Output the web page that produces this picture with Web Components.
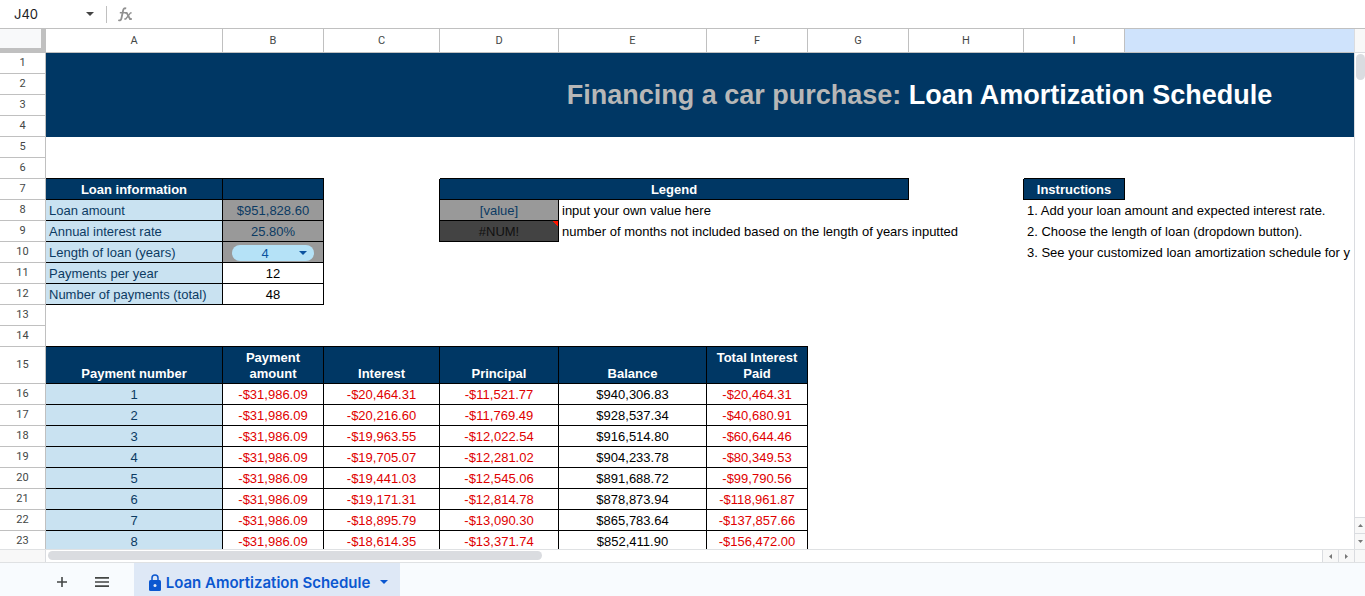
<!DOCTYPE html>
<html lang="en">
<head>
<meta charset="utf-8">
<title>Loan Amortization Schedule</title>
<style>
html, body { margin: 0; height: 100%; }
body { font-family: "Liberation Sans", Arial, sans-serif; background: #fff; overflow: hidden; }
</style>
</head>
<body>
<sheet-app></sheet-app>
<script>
function attach(el, html) {
  const t = document.createElement('template');
  t.innerHTML = html;
  el.attachShadow({ mode: 'open' }).appendChild(t.content.cloneNode(true));
}

/* Name box and function bar */
customElements.define('formula-bar', class extends HTMLElement {
  constructor() {
    super();
    attach(this, `
      <style>
        :host { display: flex; align-items: center; height: 28px; border-bottom: 1px solid #c0c0c0; background: #fff; }
        input { border: 0; outline: 0; background: none; padding: 0; margin: 0; height: 24px; color: #202124; }
        .name { width: 68px; margin-left: 14px; font: 13px Inter, Roboto, sans-serif; }
        button { border: 0; padding: 0; background: none; width: 16px; height: 20px; display: grid; place-items: center; }
        .rule { width: 1px; height: 17px; background: #c0c0c0; margin: 0 11px 0 8px; }
        .fx { display: block; }
        .formula { flex: 1; margin-left: 8px; font: 13px "Liberation Sans", sans-serif; }
      </style>
      <input class="name" aria-label="Name box" value="J40">
      <button aria-label="Open name box list"><svg width="8" height="4" viewBox="0 0 8 4"><path d="M0 0h8L4 4z" fill="#444"/></svg></button>
      <span class="rule"></span>
      <svg class="fx" width="15" height="16" viewBox="0 0 15 16" fill="none" stroke="#909090" aria-hidden="true">
        <path d="M.4 14c1.500 1 2.600.2 3-1.500L5.100 4.500C5.500 2.600 6.500 1.800 8.200 2.500" stroke-width="1.800"/>
        <path d="M1.800 6.700h5.500" stroke-width="1.500"/>
        <path d="M7 6.900h1.700l3.300 6.100h1.800" stroke-width="1.800"/>
        <path d="M13.700 6.900h-1.200l-4.800 6.100H6.300" stroke-width="1.400"/>
      </svg>
      <input class="formula" aria-label="Formula">`);
  }
});

/* Drop-down chip that lives in a cell */
customElements.define('chip-select', class extends HTMLElement {
  constructor() {
    super();
    attach(this, `
      <style>
        :host { display: grid; margin: 0 9px; color: #0b53a0; }
        select, svg { grid-area: 1 / 1; }
        select { appearance: none; border: 0; outline: 0; margin: 0; padding: 0 24px 0 8px; height: 16px; line-height: 16px;
          border-radius: 8px; background: #b5e2f7; color: inherit; font: 13px "Liberation Sans", Arial, sans-serif; text-align: center; text-align-last: center; }
        svg { justify-self: end; align-self: center; margin-right: 7px; pointer-events: none; }
      </style>
      <select aria-label="Length of loan (years)"><option>1</option><option>2</option><option>3</option><option selected>4</option></select>
      <svg width="8" height="4" viewBox="0 0 8 4"><path d="M0 0h8L4 4z" fill="#0b53a0"/></svg>`);
  }
});

/* Cell grid */
customElements.define('sheet-grid', class extends HTMLElement {
  constructor() {
    super();
    const widths = [46, 177, 101, 116, 119, 148, 101, 101, 115, 101, 668];
    const row = (n, cells, cls = '') => `<tr class="${cls}"><th scope="row">${n}</th>${cells}</tr>`;
    const info = (label, value, cls = '') => `<td class="tint k">${label}</td><td class="k c ${cls}">${value}</td>`;
    const payments = [
      ['-$20,464.31', '-$11,521.77', '$940,306.83', '-$20,464.31'],
      ['-$20,216.60', '-$11,769.49', '$928,537.34', '-$40,680.91'],
      ['-$19,963.55', '-$12,022.54', '$916,514.80', '-$60,644.46'],
      ['-$19,705.07', '-$12,281.02', '$904,233.78', '-$80,349.53'],
      ['-$19,441.03', '-$12,545.06', '$891,688.72', '-$99,790.56'],
      ['-$19,171.31', '-$12,814.78', '$878,873.94', '-$118,961.87'],
      ['-$18,895.79', '-$13,090.30', '$865,783.64', '-$137,857.66'],
      ['-$18,614.35', '-$13,371.74', '$852,411.90', '-$156,472.00']];
    const money = v => `<td class="k c${v[0] === '-' ? ' neg' : ''}">${v}</td>`;
    attach(this, `
      <style>
        :host { display: block; overflow: hidden; min-width: 0; }
        table { table-layout: fixed; width: 0; border-collapse: separate; border-spacing: 0; font-size: 13px; line-height: 16px; }
        tr { height: 21px; }
        th, td { box-sizing: border-box; padding: 0; }
        td { white-space: nowrap; vertical-align: bottom; padding: 0 3px 2px; color: #000; }
        thead tr { height: 24px; }
        thead th, th[scope=row] { font: 11px Roboto, sans-serif; color: #444746; border: 0 solid #c0c0c0; border-width: 0 1px 1px 0; background: #fff; }
        th[scope=row] { padding-bottom: 2px; }
        thead .corner { border-width: 0 5px 5px 0; background: #f8f9fa; }
        thead .on { background: #cfe3fc; }
        .title { background: #003764; color: #fff; font-size: 27px; line-height: 32px; font-weight: bold; text-align: center; vertical-align: middle; padding: 0; }
        .title span { color: #b7b7b7; }
        .k { border: 0 solid #000; border-width: 0 1px 1px 0; padding-bottom: 1px; }
        .b { border-bottom: 1px solid #000; }
        .r { border-right: 1px solid #000; }
        .c { text-align: center; }
        .head { background: #003764; color: #fff; font-weight: bold; text-align: center; white-space: normal; }
        .tint { background: #c9e2f1; color: #0c3b63; }
        .gray { background: #999; color: #0c3b63; }
        .err { background: linear-gradient(225deg, #ff1500 4px, #434343 4px); color: #111; }
        .neg { color: #e00000; }
        .tall { height: 37px; }
        .chip { padding: 0 0 1px; }
      </style>
      <table>
        <colgroup>${widths.map(w => `<col style="width:${w}px">`).join('')}</colgroup>
        <thead><tr><th class="corner"></th>${[...'ABCDEFGHI'].map(l => `<th scope="col">${l}</th>`).join('')}<th class="on"></th></tr></thead>
        <tbody>
          ${row(1, '<td class="title" colspan="10" rowspan="4"><span>Financing a car purchase:</span> Loan Amortization Schedule</td>')}
          ${row(2, '')}${row(3, '')}${row(4, '')}
          ${row(5, '<td colspan="10"></td>')}
          ${row(6, '<td class="b" colspan="2"></td><td></td><td class="b" colspan="4"></td><td></td><td class="b"></td><td></td>')}
          ${row(7, '<td class="head k">Loan information</td><td class="head k"></td><td class="r"></td><td class="head k" colspan="4">Legend</td><td class="r"></td><td class="head k">Instructions</td><td></td>')}
          ${row(8, info('Loan amount', '$951,828.60', 'gray') + '<td class="r"></td><td class="gray k c">[value]</td><td colspan="4">input your own value here</td><td colspan="2">1. Add your loan amount and expected interest rate.</td>')}
          ${row(9, info('Annual interest rate', '25.80%', 'gray') + '<td class="r"></td><td class="err k c">#NUM!</td><td colspan="4">number of months not included based on the length of years inputted</td><td colspan="2">2. Choose the length of loan (dropdown button).</td>')}
          ${row(10, '<td class="tint k">Length of loan (years)</td><td class="gray k chip"><chip-select></chip-select></td><td colspan="6"></td><td colspan="2">3. See your customized loan amortization schedule for y</td>')}
          ${row(11, info('Payments per year', '12') + '<td colspan="8"></td>')}
          ${row(12, info('Number of payments (total)', '48') + '<td colspan="8"></td>')}
          ${row(13, '<td colspan="10"></td>')}
          ${row(14, '<td class="b" colspan="6"></td><td colspan="4"></td>')}
          ${row(15, ['Payment number', 'Payment amount', 'Interest', 'Principal', 'Balance', 'Total Interest Paid'].map(h => `<td class="head k">${h}</td>`).join('') + '<td colspan="4"></td>', 'tall')}
          ${payments.map((p, i) => row(16 + i, `<td class="tint k c">${i + 1}</td>${money('-$31,986.09')}${p.map(money).join('')}<td colspan="4"></td>`)).join('')}
        </tbody>
      </table>`);
  }
});

/* Vertical and horizontal scroll rails */
customElements.define('scroll-rail', class extends HTMLElement {
  constructor() {
    super();
    const v = this.getAttribute('axis') === 'y';
    const arrow = d => `<svg width="5" height="5" viewBox="0 0 5 5"><path d="${d}" fill="#777"/></svg>`;
    attach(this, `
      <style>
        :host { display: flex; background: #fff; box-sizing: border-box; }
        :host([axis=y]) { flex-direction: column; width: 11px; border-left: 1px solid #dadce0; }
        :host([axis=x]) { height: 14px; border: solid #dfe1e3; border-width: 1px 0; }
        .start, .end { background: #f8f8f8; }
        .track { flex: 1; display: flex; }
        .thumb { background: #dadce0; border-radius: 5px; }
        button { border: 0 solid #dadce0; background: #f8f8f8; padding: 0; display: grid; place-items: center; }
        :host([axis=y]) .start { height: 23px; border-bottom: 1px solid #dadce0; }
        :host([axis=y]) .end { display: none; }
        :host([axis=y]) .thumb { width: 9px; height: 26px; margin: 1px 0 0 1px; }
        :host([axis=y]) button { height: 16px; border-top-width: 1px; }
        :host([axis=x]) .start { width: 45px; border-right: 1px solid #dadce0; }
        :host([axis=x]) .thumb { width: 494px; height: 9px; margin: 1px 0 0 2px; }
        :host([axis=x]) button { width: 16px; border-left-width: 1px; }
        :host([axis=x]) .end { width: 10px; border-left: 1px solid #dadce0; }
      </style>
      <div class="start"></div>
      <div class="track"><div class="thumb"></div></div>
      <button aria-label="${v ? 'Scroll up' : 'Scroll left'}">${arrow(v ? 'M0 4L2.500 1 5 4z' : 'M4 0L1 2.500 4 5z')}</button>
      <button aria-label="${v ? 'Scroll down' : 'Scroll right'}">${arrow(v ? 'M0 1h5L2.500 4z' : 'M1 0l3 2.500L1 5z')}</button>
      <div class="end"></div>`);
  }
});

/* Sheet tabs */
customElements.define('sheet-tabs', class extends HTMLElement {
  constructor() {
    super();
    attach(this, `
      <style>
        :host { display: flex; height: 33px; background: #f8fbfe; padding-left: 42px; box-sizing: border-box; }
        button { border: 0; background: none; padding: 5px 0 0; display: flex; align-items: center; justify-content: center; }
        .tool { width: 40px; }
        .tab { margin-left: 12px; padding-left: 3px; width: 266px; background: #dee8f6; color: #0b57d0; font: 600 15px Inter, Roboto, sans-serif; gap: 5px; }
        .tab .caret { margin-left: 5px; }
      </style>
      <button class="tool" aria-label="Add sheet"><svg width="12" height="12" viewBox="0 0 12 12"><path d="M6 1v10M1 6h10" stroke="#444746" stroke-width="1.600"/></svg></button>
      <button class="tool" aria-label="All sheets"><svg width="14" height="10" viewBox="0 0 14 10"><path d="M0 .9h14M0 5h14M0 9.100h14" stroke="#444746" stroke-width="1.700"/></svg></button>
      <button class="tab"><svg width="12" height="17" viewBox="0 0 12 17"><path d="M3 7V4a3 3 0 0 1 6 0v3" fill="none" stroke="#0b57d0" stroke-width="1.500"/><rect y="6" width="12" height="11" rx="1.500" fill="#0b57d0"/><circle cx="6" cy="11.500" r="1.500" fill="#dee8f6"/></svg><span><slot></slot></span><svg class="caret" width="8" height="4" viewBox="0 0 8 4"><path d="M0 0h8L4 4z" fill="#0b57d0"/></svg></button>`);
  }
});

customElements.define('sheet-app', class extends HTMLElement {
  constructor() {
    super();
    attach(this, `
      <style>
        :host { display: flex; flex-direction: column; height: 100vh; }
        main { flex: 1; min-height: 0; display: flex; }
        sheet-grid { flex: 1; }
      </style>
      <formula-bar></formula-bar>
      <main><sheet-grid></sheet-grid><scroll-rail axis="y"></scroll-rail></main>
      <scroll-rail axis="x"></scroll-rail>
      <sheet-tabs>Loan Amortization Schedule</sheet-tabs>`);
  }
});
</script>
</body>
</html>
